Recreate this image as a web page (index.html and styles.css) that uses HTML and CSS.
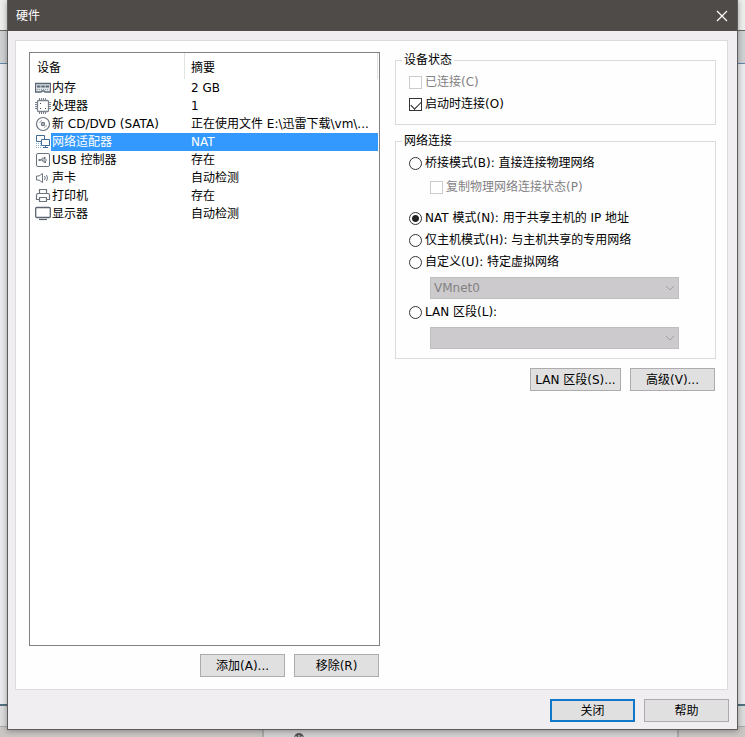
FILE: index.html
```html
<!DOCTYPE html>
<html lang="zh-CN">
<head>
    <meta charset="UTF-8">
    <meta name="viewport" content="width=device-width, initial-scale=1.0">
    <title>硬件</title>
    <link rel="stylesheet" href="styles.css">
</head>
<body>
    <!-- Parent window, seen round the dialog -->
    <div class="backdrop">
        <div class="back-title"></div>
        <div class="back-toolbar"></div>
        <div class="back-content"></div>
        <div class="back-status"></div>
        <div class="back-bottom">
            <div class="back-tab">
                <svg width="12" height="12" viewBox="0 0 12 12"><circle cx="6" cy="6" r="5" fill="#555"/><path d="M3 6V4M6 5V3M9 6V4" stroke="#ddd"/></svg>
            </div>
        </div>
    </div>

    <main class="dialog">
        <header class="title-bar">
            <h1>硬件</h1>
            <button class="close-button" aria-label="关闭窗口">
                <svg width="12" height="12" viewBox="0 0 12 12"><path d="M1 1l10 10M11 1L1 11" stroke="#fff" stroke-width="1.3"/></svg>
            </button>
        </header>

        <div class="panel">
            <section class="devices">
                <div class="device-list">
                    <table>
                        <thead>
                            <tr><th class="col-device">设备</th><th>摘要</th></tr>
                        </thead>
                        <tbody>
                            <tr>
                                <td><div class="device">
                                    <svg width="16" height="16" viewBox="0 0 16 16" fill="none" stroke="#5c6875"><path d="M.5 3.500h15v8.500H10l-1-1H7l-1 1H.5z" fill="#dfe4e9" stroke-width="1.3"/><path d="M2 6.500h3.500M6.300 6.500h3.500M10.500 6.500h3.500" stroke-width="2"/><path d="M2 9.500h12" stroke="#8d98a3" stroke-dasharray="1 1"/></svg>
                                    <span>内存</span></div></td>
                                <td>2 GB</td>
                            </tr>
                            <tr>
                                <td><div class="device">
                                    <svg width="16" height="16" viewBox="0 0 16 16" fill="none" stroke="#7b848d"><path d="M4.500 0v3M6.500 0v3M8.500 0v3M10.500 0v3M4.500 13v3M6.500 13v3M8.500 13v3M10.500 13v3M0 4.500h3M0 6.500h3M0 8.500h3M0 10.500h3M13 4.500h3M13 6.500h3M13 8.500h3M13 10.500h3"/><rect x="2.500" y="2.500" width="11" height="11" rx="1" fill="#fff" stroke-width="1.3"/><path d="M5 5.500h1M10 10.500h1M5 10.500h1" stroke="#444"/></svg>
                                    <span>处理器</span></div></td>
                                <td>1</td>
                            </tr>
                            <tr>
                                <td><div class="device">
                                    <svg width="16" height="16" viewBox="0 0 16 16" fill="none" stroke="#6b747d"><circle cx="8" cy="8" r="6.500" stroke-width="1.200"/><circle cx="8" cy="8" r="1.500" stroke-width="1.400"/><path d="M4.500 7A3.500 3.500 0 0 1 7 4.500M11.500 9A3.500 3.500 0 0 1 9 11.500" stroke="#9aa1a8"/></svg>
                                    <span>新 CD/DVD (SATA)</span></div></td>
                                <td>正在使用文件 E:\迅雷下载\vm\...</td>
                            </tr>
                            <tr class="selected">
                                <td><div class="device">
                                    <svg width="16" height="16" viewBox="0 0 16 16" fill="none" stroke="#3f6c96"><path d="M1.500 1.500h8v6h-8z" fill="#fff"/><path d="M6.500 5.500h8v6h-8z" fill="#fff"/><path d="M10.500 11.500v2M8 13.500h5"/><path d="M1 9.500h5M1 11.500h5M1 13.500h6" stroke="#8fb4d6" stroke-dasharray="1 1"/></svg>
                                    <span>网络适配器</span></div></td>
                                <td>NAT</td>
                            </tr>
                            <tr>
                                <td><div class="device">
                                    <svg width="16" height="16" viewBox="0 0 16 16" fill="none" stroke="#6b747d"><rect x="1.500" y="1.500" width="13" height="13" rx="1.500"/><path d="M4 8h8M6 8l1.500-2h2M7 8l1.500 2h1.500"/><path d="M3.500 8h2M9 6h1.500M9.500 10h1.500" stroke-width="2"/></svg>
                                    <span>USB 控制器</span></div></td>
                                <td>存在</td>
                            </tr>
                            <tr>
                                <td><div class="device">
                                    <svg width="16" height="16" viewBox="0 0 16 16" fill="none" stroke="#6b747d"><path d="M1.500 6v4h2.500l3.500 2.500v-9L4 6z"/><path d="M9.500 6q1.500 2 0 4M11.500 5q2 3 0 6"/></svg>
                                    <span>声卡</span></div></td>
                                <td>自动检测</td>
                            </tr>
                            <tr>
                                <td><div class="device">
                                    <svg width="16" height="16" viewBox="0 0 16 16" fill="none" stroke="#6b747d"><path d="M4.500 5.500v-4h7v4M4 11.500H1.500v-4.500q0-1.500 1.500-1.500h10q1.500 0 1.500 1.500v4.500H12" stroke-width="1.200"/><path d="M4.500 9.500h7v4h-7z" stroke-width="1.200"/></svg>
                                    <span>打印机</span></div></td>
                                <td>存在</td>
                            </tr>
                            <tr>
                                <td><div class="device">
                                    <svg width="16" height="16" viewBox="0 0 16 16" fill="none" stroke="#5c6570"><rect x=".7" y="1.500" width="14.600" height="10" rx="1" stroke-width="1.300"/><path d="M4 13.500h8" stroke-width="1.200"/></svg>
                                    <span>显示器</span></div></td>
                                <td>自动检测</td>
                            </tr>
                        </tbody>
                    </table>
                </div>
                <div class="buttons">
                    <button class="button">添加(A)...</button>
                    <button class="button">移除(R)</button>
                </div>
            </section>

            <section class="settings">
                <fieldset>
                    <legend>设备状态</legend>
                    <label class="option disabled"><input type="checkbox" disabled>已连接(C)</label>
                    <label class="option"><input type="checkbox" checked>启动时连接(O)</label>
                </fieldset>

                <fieldset>
                    <legend>网络连接</legend>
                    <label class="option"><input type="radio" name="network">桥接模式(B): 直接连接物理网络</label>
                    <label class="option sub-option disabled"><input type="checkbox" disabled>复制物理网络连接状态(P)</label>
                    <label class="option"><input type="radio" name="network" checked>NAT 模式(N): 用于共享主机的 IP 地址</label>
                    <label class="option"><input type="radio" name="network">仅主机模式(H): 与主机共享的专用网络</label>
                    <label class="option"><input type="radio" name="network">自定义(U): 特定虚拟网络</label>
                    <div class="select-box">
                        <select aria-label="自定义(U)" disabled><option>VMnet0</option></select>
                        <svg width="10" height="6" viewBox="0 0 10 6"><path d="M1 1l4 4 4-4" fill="none" stroke="#a3a1a3"/></svg>
                    </div>
                    <label class="option"><input type="radio" name="network">LAN 区段(L):</label>
                    <div class="select-box">
                        <select aria-label="LAN 区段(L)" disabled><option></option></select>
                        <svg width="10" height="6" viewBox="0 0 10 6"><path d="M1 1l4 4 4-4" fill="none" stroke="#a3a1a3"/></svg>
                    </div>
                </fieldset>

                <div class="buttons">
                    <button class="button wide">LAN 区段(S)...</button>
                    <button class="button">高级(V)...</button>
                </div>
            </section>
        </div>

        <footer class="buttons">
            <button class="button default">关闭</button>
            <button class="button">帮助</button>
        </footer>
    </main>
</body>
</html>
```

FILE: styles.css
```css
:root {
    --title-bg: #4f4b48;
    --dialog-bg: #f0eef0;
    --panel-bg: #fefefe;
    --line: #dcdadc;
    --button-bg: #e1e0e1;
    --button-border: #adabad;
    --accent: #0f78c8;
    --select-bg: #3399ff;
    --text-disabled: #838183;
}

* {
    margin: 0;
    padding: 0;
    box-sizing: border-box;
}

body {
    display: grid;
    min-height: 100vh;
    font-family: "DejaVu Sans", "Noto Sans CJK SC", sans-serif;
    font-size: 12px;
    line-height: 16px;
    color: #000;
}

button,
select {
    font: inherit;
}

/* Parent window */
.backdrop {
    grid-area: 1 / 1;
    display: flex;
    flex-direction: column;
    background: #dcdbdc;
}

.back-title {
    height: 31px;
    background: #eeeeec;
    border-bottom: 1px solid #666;
}

.back-toolbar {
    height: 33px;
    background: #cfd0d2;
    border-bottom: 1px solid #6488ab;
}

.back-content {
    flex: 1;
    background: #ebeaee;
    border-bottom: 2px solid #527080;
}

.back-status {
    height: 21px;
    background: #dddcdd;
    border-bottom: 1px solid #aaa;
}

.back-bottom {
    height: 10px;
    padding-left: 262px;
    padding-right: 66px;
    background: #c9c6c4;
}

.back-tab {
    height: 10px;
    padding: 5px 0 0 29px;
    overflow: hidden;
    background: #d2d0d1;
    border-left: 2px solid #aaa8a9;
    border-right: 2px solid #aaa8a9;
}

.back-tab svg {
    display: block;
}

/* Dialog */
.dialog {
    grid-area: 1 / 1;
    display: flex;
    flex-direction: column;
    margin: 0 7px 7px;
    background: var(--dialog-bg);
    border: 1px solid #5e5b5b;
    border-top: none;
    box-shadow: 0 1px 6px rgba(0, 0, 0, 0.35);
}

.title-bar {
    display: flex;
    align-items: center;
    justify-content: space-between;
    height: 31px;
    padding: 0 8px;
    background: var(--title-bg);
    color: #fff;
}

.title-bar h1 {
    font-size: 12px;
    font-weight: normal;
}

.close-button {
    display: flex;
    padding: 1px;
    background: none;
    border: none;
}

.panel {
    flex: 1;
    display: flex;
    gap: 15px;
    margin: 9px 9px 0 7px;
    padding: 11px 11px 12px 13px;
    background: var(--panel-bg);
    border: 1px solid var(--line);
}

.devices {
    flex: 35;
    display: flex;
    flex-direction: column;
    min-width: 0;
}

.settings {
    flex: 32;
    min-width: 0;
}

/* Device list */
.device-list {
    flex: 1;
    padding-right: 1px;
    border: 1px solid #828082;
    background: #fff;
}

table {
    width: 100%;
    table-layout: fixed;
    border-collapse: separate;
    border-spacing: 0;
}

th {
    height: 26px;
    padding: 4px 6px 0 7px;
    border-right: 1px solid #e3e3e3;
    font-weight: normal;
    text-align: left;
}

.col-device {
    width: 155px;
}

td {
    height: 18px;
    padding: 0 6px;
    white-space: nowrap;
    overflow: hidden;
}

th:last-child {
    padding-left: 6px;
}

td:first-child {
    padding: 0 0 0 5px;
}

.device {
    display: flex;
    align-items: center;
}

.device svg {
    flex: none;
}

.device span {
    flex: 1;
    padding-left: 1px;
    line-height: 18px;
}

.selected td:last-child,
.selected span {
    background: var(--select-bg);
    color: #fff;
}

/* Buttons */
.buttons {
    display: flex;
    justify-content: flex-end;
    gap: 9px;
    margin-top: 8px;
    padding-right: 1px;
}

.button {
    width: 85px;
    height: 23px;
    background: var(--button-bg);
    border: 1px solid var(--button-border);
    white-space: nowrap;
}

.button.wide {
    width: 91px;
}

.button.default {
    border: 2px solid var(--accent);
}

footer.buttons {
    margin-top: 9px;
    padding: 0 8px 7px;
}

/* Network settings */
fieldset {
    min-width: 0;
    margin-bottom: 8px;
    padding: 3px 12px 9px 13px;
    border: 1px solid var(--line);
}

fieldset + .buttons {
    margin-top: 9px;
}

legend {
    margin-left: -7px;
    padding: 0 2px;
}

.option {
    display: flex;
    align-items: center;
    gap: 3px;
    height: 22px;
    white-space: nowrap;
}

.sub-option {
    margin: 2px 0 9px 21px;
}

.disabled {
    color: var(--text-disabled);
}

.option input {
    flex: none;
    appearance: none;
    width: 13px;
    height: 13px;
    background: #fff;
    border: 1px solid #333;
}

.option input:disabled {
    border-color: #ccc;
}

.option input[type="radio"] {
    border-radius: 50%;
}

.option input[type="radio"]:checked {
    background: radial-gradient(circle, #222 3px, #fff 4px);
}

.option input[type="checkbox"]:checked::before {
    content: "";
    display: block;
    width: 9px;
    height: 5px;
    margin: 2px 1px;
    border-left: 1px solid #222;
    border-bottom: 1px solid #222;
    transform: rotate(-45deg);
}

.select-box {
    display: grid;
    align-items: center;
    margin: 4px 24px 2px 21px;
}

.select-box:last-child {
    margin-bottom: 0;
}

.select-box select {
    grid-area: 1 / 1;
    appearance: none;
    width: 100%;
    height: 22px;
    padding: 0 3px;
    background: #cccacc;
    border: 1px solid #bfbdbf;
    border-radius: 0;
    color: var(--text-disabled);
    opacity: 1;
}

.select-box svg {
    grid-area: 1 / 1;
    justify-self: end;
    margin-right: 4px;
}
```
